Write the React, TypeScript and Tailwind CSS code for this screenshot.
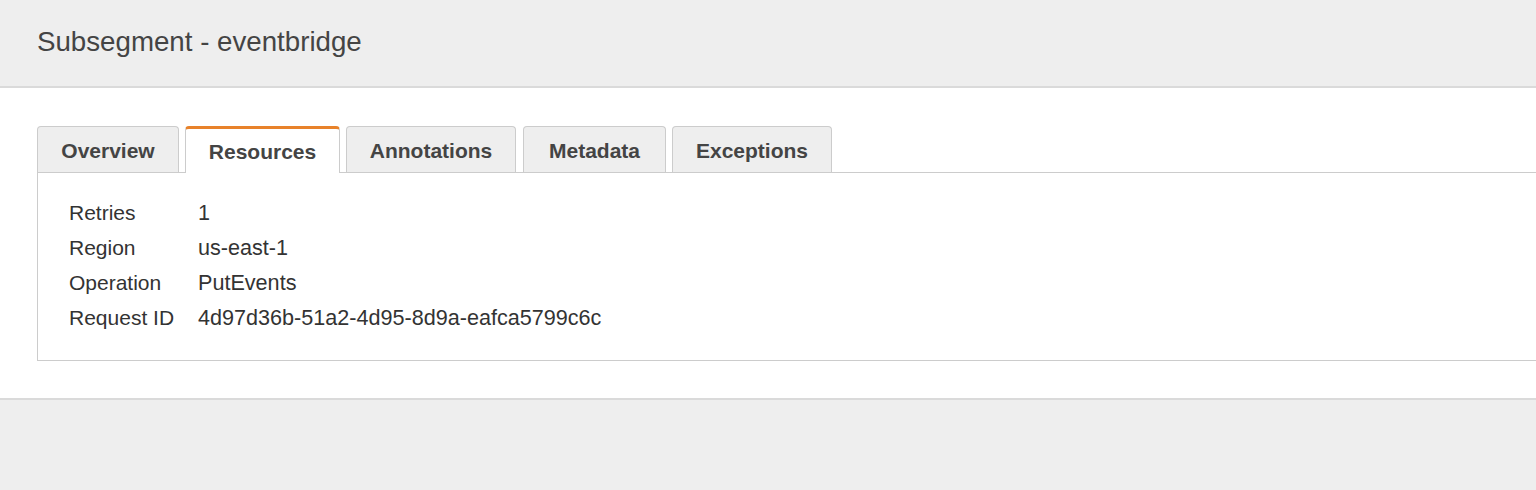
import React from "react";

const tabs = [
  { label: "Overview", active: false, w: "w-[142px]" },
  { label: "Resources", active: true, w: "w-[155px]" },
  { label: "Annotations", active: false, w: "w-[170px]" },
  { label: "Metadata", active: false, w: "w-[143px] ml-[1px]" },
  { label: "Exceptions", active: false, w: "w-[160px]" },
];

const rows: [string, string][] = [
  ["Retries", "1"],
  ["Region", "us-east-1"],
  ["Operation", "PutEvents"],
  ["Request ID", "4d97d36b-51a2-4d95-8d9a-eafca5799c6c"],
];

export default function App() {
  return (
    <div
      className="w-[1536px] h-[490px] overflow-hidden bg-[#eeeeee] text-[#444444]"
      style={{ fontFamily: '"Liberation Sans", Arial, Helvetica, sans-serif' }}
    >
      <div className="h-[88px] flex items-center pl-[37px] pb-[2px] border-b-2 border-[#dadada]">
        <h1 className="text-[27.7px] leading-none font-normal text-[#444444]">Subsegment - eventbridge</h1>
      </div>
      <div className="bg-white h-[312px] pt-[38px] pl-[37px] border-b-2 border-[#dadada]">
        <div className="w-[1560px]">
          <div className="flex gap-[6px] items-end h-[46px]">
            {tabs.map((t) =>
              t.active ? (
                <div
                  key={t.label}
                  className={`${t.w} relative z-10 h-[47px] -mb-px flex items-center justify-center bg-white border border-b-0 border-[#cccccc] border-t-[3px] border-t-[#e8822a] rounded-t-[4px] text-[21px] font-bold text-[#444444]`}
                >
                  <span className="pt-[1px]">{t.label}</span>
                </div>
              ) : (
                <div
                  key={t.label}
                  className={`${t.w} h-[46px] flex items-center justify-center bg-[#eeeeee] border border-b-0 border-[#cccccc] rounded-t-[4px] text-[21px] font-bold text-[#444444]`}
                >
                  <span className="pt-[3px]">{t.label}</span>
                </div>
              )
            )}
          </div>
          <div className="border border-[#cccccc] border-r-0 h-[189px] pt-[22px] pl-[31px]">
            {rows.map(([k, v]) => (
              <div key={k} className="flex h-[35px] items-baseline leading-[35px] text-[#333333]">
                <div className="w-[129px] text-[21px]">{k}</div>
                <div className="text-[21.6px]">{v}</div>
              </div>
            ))}
          </div>
        </div>
      </div>
    </div>
  );
}
